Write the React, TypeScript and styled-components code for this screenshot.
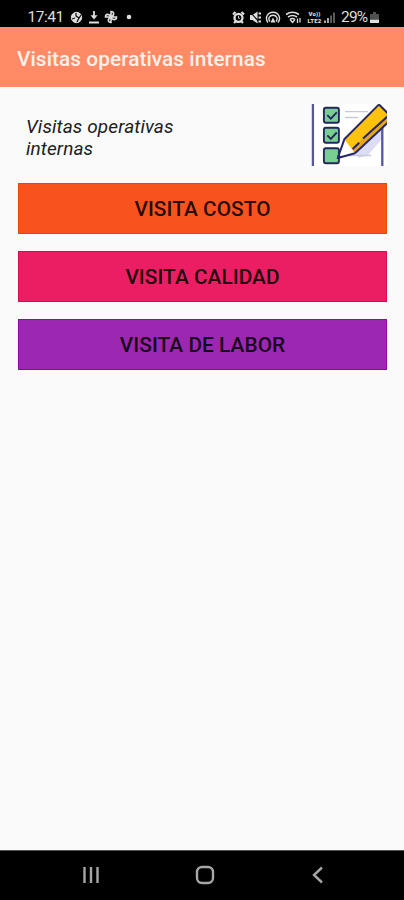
import React from "react";
import styled, { createGlobalStyle } from "styled-components";

const GlobalStyle = createGlobalStyle`
  body { margin: 0; background: #fafafa; font-family: Roboto, sans-serif; }
  * { box-sizing: border-box; }
`;

const Screen = styled.div`
  display: flex;
  flex-direction: column;
  height: 900px;
  width: 404px;
  background: #fafafa;
`;

const StatusBar = styled.header`
  display: flex;
  justify-content: space-between;
  align-items: center;
  height: 27px;
  padding: 7px 25px 0 27.5px;
  background: #000;
  color: #dedede;
  flex: none;
`;

const StatusGroup = styled.div`
  display: flex;
  align-items: center;
`;

const StatusText = styled.span<{ $width: number; $spacing?: number }>`
  width: ${(p) => p.$width}px;
  font-size: 15.5px;
  line-height: 20px;
  letter-spacing: ${(p) => p.$spacing ?? 0}px;
  white-space: nowrap;
`;

const Glyph = styled.svg<{ $gap?: number }>`
  display: block;
  flex: none;
  margin-left: ${(p) => p.$gap ?? 0}px;
  fill: none;
  stroke: #dedede;
`;

const VolteBadge = styled.span`
  display: flex;
  flex-direction: column;
  align-items: center;
  width: 15px;
  margin-left: 5px;
  font-size: 6px;
  font-weight: 900;
  line-height: 7px;
  letter-spacing: 0.2px;
`;

const AppBar = styled.div`
  display: flex;
  align-items: center;
  height: 60px;
  padding: 3px 17px 0;
  background: #ff8a65;
  flex: none;
`;

const Title = styled.h1`
  margin: 0;
  color: #fff0e9;
  font-size: 20.8px;
  font-weight: 500;
  line-height: 26px;
  letter-spacing: 0.07px;
  white-space: nowrap;
`;

const Content = styled.main`
  flex: 1;
  padding: 17px 17px 0 18px;
`;

const Intro = styled.section`
  display: flex;
  justify-content: space-between;
  height: 79px;
`;

const IntroText = styled.p`
  width: 180px;
  margin: 12px 0 0 8px;
  color: #202020;
  font-size: 19px;
  font-style: italic;
  line-height: 22px;
  letter-spacing: 0.1px;
`;

const Actions = styled.div`
  display: flex;
  flex-direction: column;
  gap: 17.4px;
`;

const ActionButton = styled.button<{ $color: string; $edge: string }>`
  height: 50.6px;
  padding: 2px 0 0;
  border: 1px solid ${(p) => p.$edge};
  background: ${(p) => p.$color};
  color: rgba(0, 0, 0, 0.87);
  font: 500 20.8px/24px Roboto, sans-serif;
  letter-spacing: 0.06px;
`;

const NavBar = styled.nav`
  display: flex;
  align-items: center;
  justify-content: space-between;
  height: 50px;
  padding: 0 79px 2px 82px;
  border-top: 1px solid #555;
  background: #000;
  flex: none;
`;

const NavIcon = styled.svg`
  display: block;
  fill: none;
  stroke: #a6a6a6;
  stroke-width: 2.4;
`;

const HomeIcon = styled(NavIcon)`
  margin-right: 2px;
`;

const checkRows = [3.7, 23.8, 44.3];

const ChecklistArt = () => (
  <svg width="76" height="62" viewBox="0 0 76 62" fill="none">
    <path fill="#fff" d="M0 0h76v62H0z" />
    <path d="M44 50 71 22v13L57 51l-9 3z" fill="#dcdcf4" />
    <path d="M34 7.7h23M34 13.5h13M38 51.5h22" stroke="#c9c9dc" strokeWidth="1.3" />
    <path d="M1.9 0v62M71.3 12v50" stroke="#56569c" strokeWidth="2.3" />
    {checkRows.map((y, i) => (
      <g key={y} stroke="#25255f">
        <rect x="12.9" y={y} width="15" height="15" rx="2" fill="#78cf91" strokeWidth="1.9" />
        {i < 2 && <path d={`m16.3 ${y + 7.5} 3.5 3.5 6-6.3`} strokeWidth="1.9" />}
      </g>
    ))}
    <path d="M33.3 35.3 26.8 54 44 49.3z" fill="#fff" />
    <path d="M33.3 35.3 67 1.4Q68 .5 69 1.5L77 9.5V18.5L44 49.3z" fill="#ffc20d" />
    <path d="m44 49.3 33-31V12L40.5 44.5z" fill="#e8a719" />
    <path d="M44 49.3 26.8 54l6.5-18.7L67 1.4Q68 .5 69 1.5l8 8M44 49.3 77 18.5" stroke="#26266a" strokeWidth="2" strokeLinejoin="round" />
    <path d="m52 34.5 25-22.5M41.7 45l6.5-6.2" stroke="#26266a" strokeWidth="2.1" />
    <path d="m25.7 55 1.5-5 4 3.8z" fill="#26266a" />
  </svg>
);

const LeftStatus = () => (
  <StatusGroup>
    <StatusText $width={36} $spacing={-0.5}>17:41</StatusText>
    <Glyph $gap={6} width="13" height="13" viewBox="0 0 13 13">
      <circle cx="6.5" cy="6.5" r="5.2" fill="#dedede" />
      <path d="M6 2v3l3 2 2-3M5 7 2 8M9 7l-2 4" stroke="#111" strokeWidth="1.3" />
    </Glyph>
    <Glyph $gap={5.5} width="12" height="14" viewBox="0 0 12 14" strokeWidth="1.8">
      <path d="M6 1v7M1 12.5h10" />
      <path d="M2.5 5.2h7L6 9.6z" fill="#dedede" stroke="none" />
    </Glyph>
    <Glyph $gap={4} width="14" height="14" viewBox="0 0 14 14" strokeWidth="1.6">
      <path d="M7 7V1.5c3 0 4 3.5 0 5.5h5.5c0 3-3.5 4-5.5 0v5.5c-3 0-4-3.5 0-5.5H1.5c0-3 3.5-4 5.5 0Z" />
    </Glyph>
    <Glyph $gap={8} width="6" height="6" viewBox="0 0 6 6">
      <circle cx="3" cy="3" r="2.3" fill="#dedede" stroke="none" />
    </Glyph>
  </StatusGroup>
);

const RightStatus = () => (
  <StatusGroup>
    <Glyph width="13" height="13" viewBox="0 0 13 13">
      <circle cx="6.5" cy="6.8" r="4" strokeWidth="2.3" />
      <path d="M1 3.5 3.5 1M12 3.5 9.5 1M2 12l2-2M11 12 9 10" strokeWidth="2.2" />
      <path d="M6.5 4.8v2.5H8" strokeWidth=".9" />
    </Glyph>
    <Glyph $gap={4} width="13" height="13" viewBox="0 0 13 13">
      <path d="M1 4h2.5L8.5 .5v12L3.5 9H1z" fill="#dedede" stroke="none" />
      <path d="m1 1 10 10.8" stroke="#000" strokeWidth="1.1" />
      <path d="M9.5 2.5H12M9.5 6.5H12M9.5 10.5H12" strokeWidth="1.8" />
    </Glyph>
    <Glyph $gap={3} width="16" height="13" viewBox="0 0 16 13" strokeWidth="1.4">
      <path d="M3 11.5C-.5 7 2.5 1.3 8 1.3s8.5 5.7 5 10.2M5 10.5C2.5 7.5 4.5 4.2 8 4.2s5.5 3.3 3 6.3" />
      <path d="m8 6.5-2.5 5h5z" fill="#dedede" stroke="none" />
    </Glyph>
    <Glyph $gap={4} width="17" height="13" viewBox="0 0 17 13">
      <path d="M1 3.5q6.5-4.5 13 0M3 6q4.5-3 9 0M5 8.5q2.5-2 5 0" strokeWidth="1.6" />
      <path d="m5 8.5 2.5 3 2.5-3M12.5 12V7.5M15 7v4.5" strokeWidth="1.3" />
    </Glyph>
    <VolteBadge><span>Vo))</span><span>LTE2</span></VolteBadge>
    <Glyph $gap={2} width="11" height="13" viewBox="0 0 11 13" strokeWidth="1.5">
      <path d="M1 12V9.5M4 12V7" />
      <path d="M7 12V4.5M10 12V1.5" stroke="#777" />
    </Glyph>
    <Glyph $gap={5} width="1" height="13" viewBox="0 0 1 13" />
    <StatusText $width={28} $spacing={-0.8}>29%</StatusText>
    <Glyph $gap={1} width="9" height="13" viewBox="0 0 9 13">
      <path d="M0 3h3V1h3v2h3v5H0z" fill="#505050" stroke="none" />
      <path d="M0 8.5h9V12H0z" fill="#dedede" stroke="none" />
    </Glyph>
  </StatusGroup>
);

export default function App() {
  return (
    <Screen>
      <GlobalStyle />
      <StatusBar><LeftStatus /><RightStatus /></StatusBar>
      <AppBar><Title>Visitas operativas internas</Title></AppBar>
      <Content>
        <Intro>
          <IntroText>Visitas operativas internas</IntroText>
          <ChecklistArt />
        </Intro>
        <Actions>
          <ActionButton $color="#f8531e" $edge="#ed4314">VISITA COSTO</ActionButton>
          <ActionButton $color="#ec1e63" $edge="#d90b50">VISITA CALIDAD</ActionButton>
          <ActionButton $color="#9c27b0" $edge="#86109b">VISITA DE LABOR</ActionButton>
        </Actions>
      </Content>
      <NavBar>
        <NavIcon width="18" height="18" viewBox="0 0 18 18"><path d="M2.5 1v16M9 1v16M15.5 1v16" /></NavIcon>
        <HomeIcon width="20" height="20" viewBox="0 0 20 20"><rect x="2" y="2" width="16" height="16" rx="5" /></HomeIcon>
        <NavIcon width="14" height="18" viewBox="0 0 14 18"><path d="m11 1.5-8 7.5 8 7.5" /></NavIcon>
      </NavBar>
    </Screen>
  );
}
